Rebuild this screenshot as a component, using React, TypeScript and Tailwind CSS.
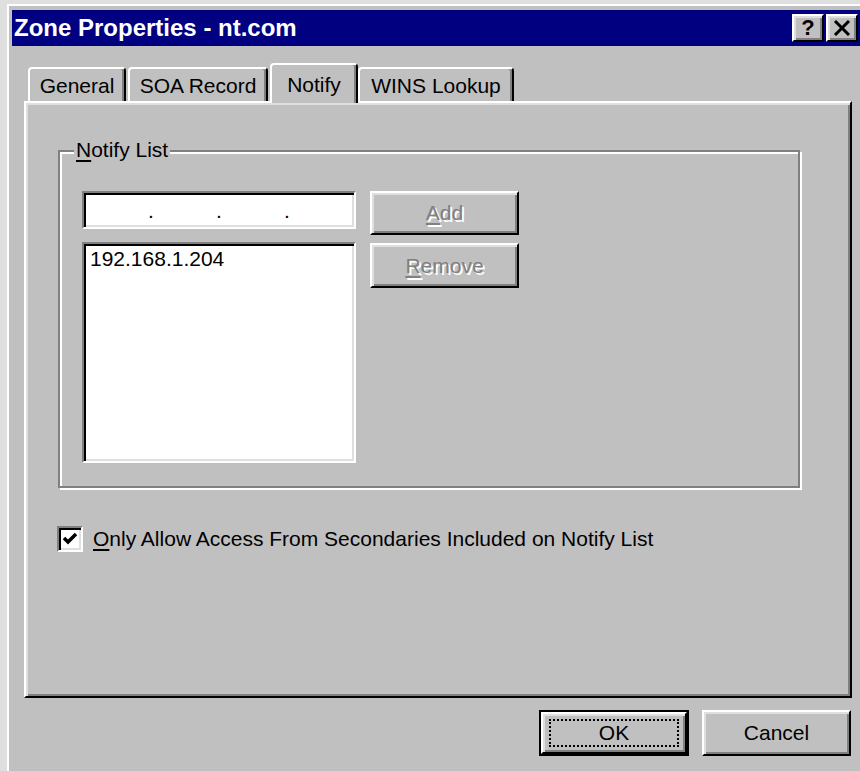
import type { ReactNode } from 'react';

// classic 3D bevels
const raised =
  'border-2 border-t-white border-l-white border-r-black border-b-black shadow-[inset_2px_2px_0_#dfdfdf,inset_-2px_-2px_0_#808080]';
const sunken =
  'border-2 border-t-[#808080] border-l-[#808080] border-r-white border-b-white shadow-[inset_2px_2px_0_#000,inset_-2px_-2px_0_#dfdfdf]';
const disabledText = 'text-[#808080] [text-shadow:2px_2px_0_#fff]';

const Key = ({ children }: { children: ReactNode }) => (
  <span className="underline decoration-[2px] underline-offset-[3px]">{children}</span>
);

const TitleBar = () => (
  <div className="flex h-[36px] items-center justify-between bg-[#000080] pl-[2px] pr-[2px]">
    <span className="text-[24px] font-bold leading-none text-white">Zone Properties - nt.com</span>
    <div className="flex gap-[2px]">
      <button className={`flex h-[28px] w-[32px] items-center justify-center bg-[#c0c0c0] ${raised}`}>
        <span className="text-[22px] font-bold leading-none">?</span>
      </button>
      <button className={`flex h-[28px] w-[32px] items-center justify-center bg-[#c0c0c0] ${raised}`}>
        <svg width="18" height="16" viewBox="0 0 18 16">
          <path d="M2 1 L16 15 M16 1 L2 15" stroke="#000" strokeWidth="3" />
        </svg>
      </button>
    </div>
  </div>
);

interface TabProps {
  label: string;
  width: string;
  active?: boolean;
  className?: string;
}

const Tab = ({ label, width, active, className = '' }: TabProps) => (
  <div
    className={`flex items-center justify-center rounded-t-[4px] border-t-2 border-l-2 border-r-2 border-t-white border-l-white border-r-black bg-[#c0c0c0] shadow-[inset_-2px_0_0_#808080] ${width} ${
      active ? 'relative z-10 -mb-[2px] h-[40px] pt-[1px]' : 'h-[34px] pt-[2px]'
    } ${className}`}
  >
    {label}
  </div>
);

const NotifyGroup = () => (
  <fieldset className="relative ml-[32px] mt-[47px] h-[338px] w-[742px] border-2 border-[#808080] shadow-[inset_2px_2px_0_#fff,2px_2px_0_#fff]">
    <span className="absolute -top-[14px] left-[14px] bg-[#c0c0c0] px-[2px] leading-[24px]">
      <Key>N</Key>otify List
    </span>
    <div className="flex pl-[22px] pt-[39px]">
      <div className="flex flex-col">
        {/* ip address field */}
        <div className={`flex h-[38px] w-[274px] items-end bg-white pb-[6px] pl-[64px] ${sunken}`}>
          <span className="w-[68px] leading-none">.</span>
          <span className="w-[68px] leading-none">.</span>
          <span className="w-[68px] leading-none">.</span>
        </div>
        <div className={`mt-[13px] h-[221px] w-[274px] bg-white pl-[6px] pt-[3px] ${sunken}`}>
          <div className="leading-[24px]">192.168.1.204</div>
        </div>
      </div>
      <div className="ml-[14px] flex flex-col gap-[8px]">
        <button className={`h-[44px] w-[149px] bg-[#c0c0c0] ${raised} ${disabledText}`}>
          <Key>A</Key>dd
        </button>
        <button className={`h-[45px] w-[149px] bg-[#c0c0c0] ${raised} ${disabledText}`}>
          <Key>R</Key>emove
        </button>
      </div>
    </div>
  </fieldset>
);

const Panel = () => (
  <div className={`h-[597px] bg-[#c0c0c0] ${raised}`}>
    <NotifyGroup />
    <label className="ml-[31px] mt-[38px] flex items-center gap-[10px]">
      <span className={`flex h-[26px] w-[26px] items-center justify-center bg-white ${sunken}`}>
        <svg width="16" height="14" viewBox="0 0 16 14">
          <path d="M2 6 L6 10 L14 2" fill="none" stroke="#000" strokeWidth="3.5" />
        </svg>
      </span>
      <span className="leading-[26px]">
        <Key>O</Key>nly Allow Access From Secondaries Included on Notify List
      </span>
    </label>
  </div>
);

const Footer = () => (
  <div className="mt-[12px] flex justify-end gap-[13px] pr-[1px]">
    <button className="h-[46px] w-[150px] border-2 border-black">
      <div className={`relative flex h-full w-full items-center justify-center bg-[#c0c0c0] ${raised}`}>
        <span className="absolute inset-x-[6px] inset-y-[5px] border-2 border-dotted border-black" />
        OK
      </div>
    </button>
    <button className={`h-[46px] w-[149px] bg-[#c0c0c0] ${raised}`}>Cancel</button>
  </div>
);

export default function App() {
  return (
    <div className="h-[771px] w-[860px] overflow-hidden bg-[#dfdfdf] pl-[7px] pt-[4px] font-['Liberation_Sans',Arial,sans-serif] text-[21px] text-black">
      <div className="h-full border-l-2 border-t-2 border-white bg-[#c0c0c0] pl-[3px] pt-[4px]">
        <TitleBar />
        <div className="pl-[12px] pr-[8px]">
          <div className="mt-[17px] flex items-end pl-[4px]">
            <Tab label="General" width="w-[98px]" />
            <Tab label="SOA Record" width="w-[140px]" className="ml-[2px]" />
            <Tab label="Notify" width="w-[88px]" active className="ml-[2px]" />
            <Tab label="WINS Lookup" width="w-[156px]" />
          </div>
          <Panel />
          <Footer />
        </div>
      </div>
    </div>
  );
}
